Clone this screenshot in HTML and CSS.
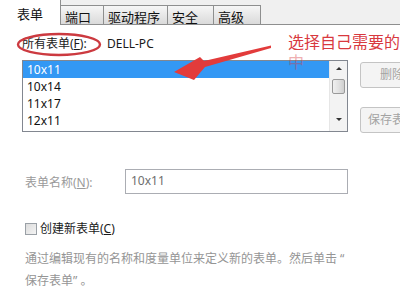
FILE: index.html
```html
<!DOCTYPE html>
<html>
<head>
<meta charset="utf-8">
<link rel="stylesheet" href="styles.css">
</head>
<body>
<div class="win">
  <div class="tabs">
    <div class="tab sel t1">表单</div>
    <div class="tab t2">端口</div>
    <div class="tab t3">驱动程序</div>
    <div class="tab t4">安全</div>
    <div class="tab t5">高级</div>
  </div>
  <div class="panel">
    <div class="row-all">
      <span class="lbl">所有表单(<u>F</u>):</span>
      <span class="pc">DELL-PC</span>
    </div>
    <div class="list-row">
      <div class="listbox">
        <div class="items">
          <div class="item selected">10x11</div>
          <div class="item">10x14</div>
          <div class="item">11x17</div>
          <div class="item">12x11</div>
        </div>
        <div class="scroll">
          <div class="arr up"></div>
          <div class="thumb"></div>
          <div class="arr down"></div>
        </div>
      </div>
      <div class="btns">
        <div class="btn b1">删除</div>
        <div class="btn b2">保存表单</div>
      </div>
    </div>
    <div class="name-row">
      <span class="nlbl">表单名称(<u>N</u>):</span>
      <div class="input">10x11</div>
    </div>
    <div class="check-row">
      <span class="box"></span>
      <span class="ctext">创建新表单(<u>C</u>)</span>
    </div>
    <div class="desc">通过编辑现有的名称和度量单位来定义新的表单。然后单击 “<br>保存表单” 。</div>
  </div>
  <div class="note">选择自己需要的表<br><span class="faint">中</span></div>
  <svg class="marks" width="400" height="300" viewBox="0 0 400 300">
    <ellipse cx="59" cy="44.5" rx="41" ry="10.5" fill="none" stroke="#cc3a40" stroke-width="2.4"/>
    <polygon points="271,45.5 204,61 200,57 174,72 194,80 205,67 271,48" fill="#e23b3b"/>
  </svg>
</div>
</body>
</html>
```
FILE: styles.css
```css
html, body {
  margin: 0;
  padding: 0;
}
.win {
  position: relative;
  width: 400px;
  height: 300px;
  overflow: hidden;
  background: #ffffff;
  font-family: "Noto Sans", "Noto Sans CJK SC", sans-serif;
  font-size: 12px;
  color: #1a1a1a;
}
u {
  text-decoration: underline;
  text-underline-offset: 1px;
}
.tabs {
  display: flex;
  align-items: flex-end;
  height: 25px;
  box-sizing: border-box;
  background: #f0f0f0;
  border-bottom: 1px solid #8e8f8f;
}
.tab {
  flex-shrink: 0;
  box-sizing: border-box;
  height: 19px;
  margin-left: -1px;
  padding-left: 4px;
  padding-top: 2px;
  font-size: 13px;
  line-height: 18px;
  color: #111;
  border: 1px solid #8e8f8f;
  border-bottom: none;
  background: linear-gradient(#f6f6f6, #e8e8e8 50%, #dadada);
}
.tab.sel {
  height: 25px;
  margin-bottom: -1px;
  background: #ffffff;
  padding-left: 17px;
  padding-top: 5px;
  line-height: 18px;
  border-top: none;
  border-left: none;
}
.t1 { width: 61px; margin-left: 0; }
.t2 { width: 44px; }
.t3 { width: 65px; }
.t4 { width: 47px; }
.t5 { width: 48px; }
.panel {
  padding: 11px 0 0 22px;
}
.row-all {
  display: flex;
  height: 16px;
  line-height: 16px;
}
.lbl {
  width: 85px;
}
.pc {
  color: #1a1a1a;
}
.list-row {
  display: flex;
  margin-top: 8px;
}
.listbox {
  flex-shrink: 0;
  display: flex;
  width: 326px;
  height: 72px;
  box-sizing: border-box;
  border: 1px solid #828790;
  overflow: hidden;
}
.items {
  flex: 1;
}
.item {
  height: 17px;
  line-height: 17px;
  padding-left: 4px;
  color: #111;
}
.item.selected {
  background: #3398f4;
  color: #ffffff;
}
.scroll {
  width: 17px;
  display: flex;
  flex-direction: column;
  align-items: center;
  background: #f3f3f3;
  border-left: 1px solid #e6e6e6;
}
.arr {
  width: 0;
  height: 0;
  border-left: 3px solid transparent;
  border-right: 3px solid transparent;
}
.arr.up {
  margin-top: 6px;
  border-bottom: 3px solid #333;
}
.arr.down {
  margin-top: auto;
  margin-bottom: 10px;
  border-top: 3px solid #333;
}
.thumb {
  margin-top: 9px;
  width: 13px;
  height: 15px;
  box-sizing: border-box;
  border: 1px solid #9a9a9a;
  border-radius: 2px;
  background: linear-gradient(90deg, #f0f0f0, #e2e2e2 50%, #cfcfcf);
}
.btns {
  flex-shrink: 0;
  margin-left: 12px;
  display: flex;
  flex-direction: column;
}
.btn {
  box-sizing: border-box;
  width: 64px;
  height: 26px;
  border: 1px solid #c4c4c4;
  border-radius: 3px;
  background: #f4f4f4;
  color: #a3a3a3;
  font-size: 12px;
  line-height: 24px;
  text-align: center;
  white-space: nowrap;
}
.b1 {
  margin-top: 2px;
}
.b2 {
  margin-top: 19px;
}
.name-row {
  display: flex;
  align-items: center;
  margin-top: 36px;
}
.nlbl {
  flex-shrink: 0;
  width: 100px;
  padding-left: 3px;
  color: #9a9a9a;
}
.input {
  flex-shrink: 0;
  width: 223px;
  height: 25px;
  box-sizing: border-box;
  border: 1px solid #abadb3;
  padding-left: 5px;
  line-height: 21px;
  color: #6e6e6e;
}
.check-row {
  display: flex;
  align-items: center;
  margin-top: 28px;
  height: 13px;
  padding-left: 3px;
}
.box {
  flex-shrink: 0;
  width: 12px;
  height: 12px;
  box-sizing: border-box;
  border: 1px solid #9aa0a6;
  background: linear-gradient(135deg, #dcdcdc, #f4f4f4);
}
.ctext {
  margin-left: 3px;
  line-height: 16px;
  color: #1a1a1a;
}
.desc {
  margin-top: 13px;
  padding-left: 3px;
  line-height: 22px;
  color: #959595;
  white-space: nowrap;
}
.note {
  position: absolute;
  left: 288px;
  top: 32px;
  font-size: 16px;
  line-height: 20px;
  color: #d8393f;
  white-space: nowrap;
}
.faint {
  opacity: 0.4;
}
.marks {
  position: absolute;
  left: 0;
  top: 0;
  pointer-events: none;
}
```
